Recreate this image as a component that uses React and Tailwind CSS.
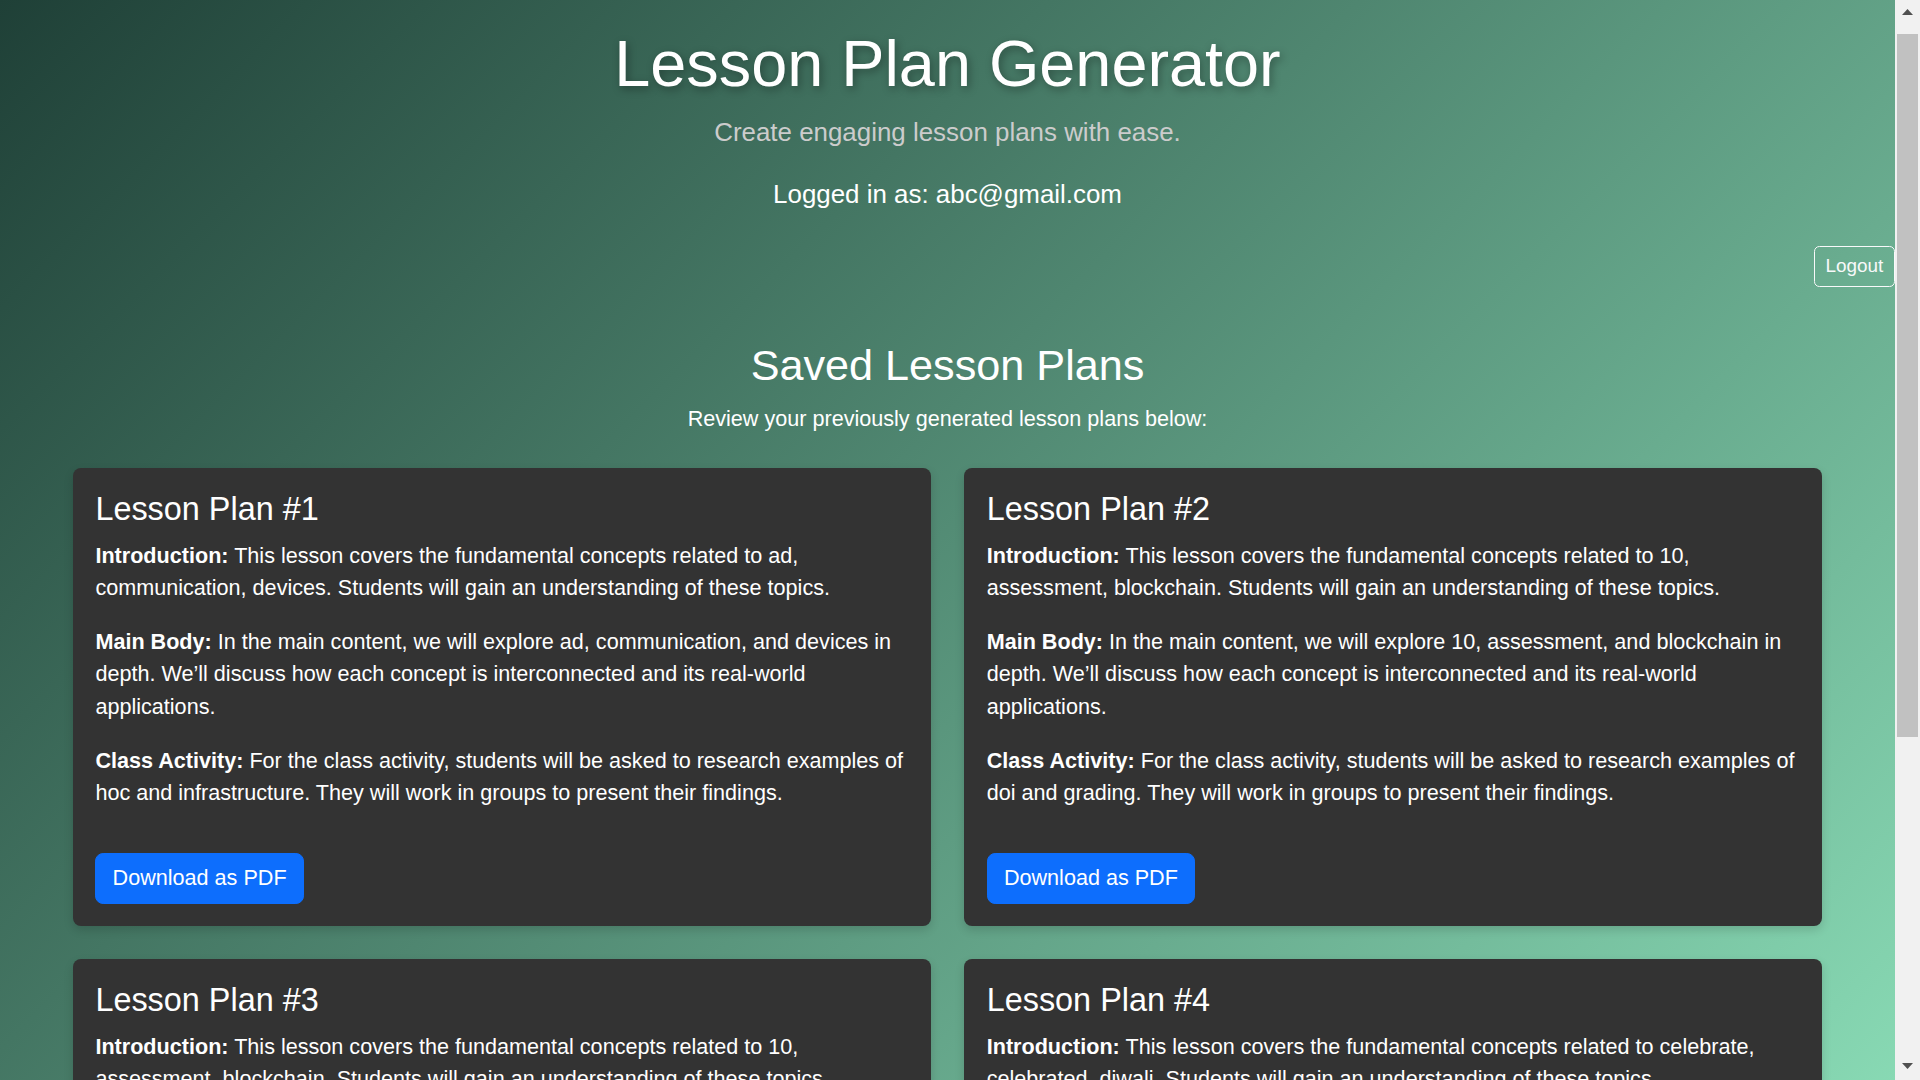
import React from 'react';

const plans = [
  {
    id: 1,
    intro: 'This lesson covers the fundamental concepts related to ad, communication, devices. Students will gain an understanding of these topics.',
    body: 'In the main content, we will explore ad, communication, and devices in depth. We’ll discuss how each concept is interconnected and its real-world applications.',
    activity: 'For the class activity, students will be asked to research examples of hoc and infrastructure. They will work in groups to present their findings.',
  },
  {
    id: 2,
    intro: 'This lesson covers the fundamental concepts related to 10, assessment, blockchain. Students will gain an understanding of these topics.',
    body: 'In the main content, we will explore 10, assessment, and blockchain in depth. We’ll discuss how each concept is interconnected and its real-world applications.',
    activity: 'For the class activity, students will be asked to research examples of doi and grading. They will work in groups to present their findings.',
  },
  {
    id: 3,
    intro: 'This lesson covers the fundamental concepts related to 10, assessment, blockchain. Students will gain an understanding of these topics.',
    body: 'In the main content, we will explore 10, assessment, and blockchain in depth. We’ll discuss how each concept is interconnected and its real-world applications.',
    activity: 'For the class activity, students will be asked to research examples of doi and grading. They will work in groups to present their findings.',
  },
  {
    id: 4,
    intro: 'This lesson covers the fundamental concepts related to celebrate, celebrated, diwali. Students will gain an understanding of these topics.',
    body: 'In the main content, we will explore celebrate, celebrated, and diwali in depth. We’ll discuss how each concept is interconnected and its real-world applications.',
    activity: 'For the class activity, students will be asked to research examples of festival and traditions. They will work in groups to present their findings.',
  },
];

function PlanCard({ plan }) {
  return (
    <div className="bg-[#333333] rounded-[8px] p-[22px] pl-[22.4px] text-white shadow-[0_4px_10px_rgba(0,0,0,0.15)]">
      <h4 className="text-[32.4px] leading-[38.88px] font-normal mb-[10.8px]">Lesson Plan #{plan.id}</h4>
      <p className="mb-[21.6px]">
        <strong className="font-bold">Introduction:</strong> {plan.intro}
      </p>
      <p className="mb-[21.6px]">
        <strong className="font-bold">Main Body:</strong> {plan.body}
      </p>
      <p className="mb-[21.6px]">
        <strong className="font-bold">Class Activity:</strong> {plan.activity}
      </p>
      <button className="mt-[22px] bg-[#0d6efd] text-white border border-[#0d6efd] rounded-[8.1px] px-[16.2px] py-[8.1px] text-[21.6px] leading-[32.4px]">
        Download as PDF
      </button>
    </div>
  );
}

// browser-style vertical scrollbar shown at the right edge
function Scrollbar() {
  return (
    <div className="w-[25px] shrink-0 h-screen bg-[#f1f1f1] flex flex-col">
      <div className="h-[24px] flex items-center justify-center">
        <svg width="11" height="6" viewBox="0 0 11 6"><path d="M5.5 0L11 6H0z" fill="#505050" /></svg>
      </div>
      <div className="mt-[10px] mx-[2px] h-[703px] bg-[#c1c1c1]" />
      <div className="flex-1" />
      <div className="h-[28px] flex items-center justify-center">
        <svg width="11" height="6" viewBox="0 0 11 6"><path d="M0 0H11L5.5 6z" fill="#505050" /></svg>
      </div>
    </div>
  );
}

export default function App() {
  return (
    <div className="h-screen flex overflow-hidden">
      <div className="flex-1 min-w-0 overflow-y-auto [scrollbar-width:none]">
        <div className="min-h-full flex flex-col bg-[linear-gradient(135deg,#1f4037,#99f2c8)] font-['Liberation_Sans',Arial,sans-serif] text-[21.6px] leading-[32.4px] text-white pb-[150px]">
          {/* header */}
          <header className="pt-[25.4px] text-center">
            <h1 className="text-[64.8px] leading-[77.76px] font-normal mb-[9.6px] [text-shadow:2px_3px_8px_rgba(0,0,0,0.35)]">
              Lesson Plan Generator
            </h1>
            <p className="text-[25.92px] leading-[38.88px] text-[#cccccc]">Create engaging lesson plans with ease.</p>
            <p className="mt-[23.8px] text-[25.92px] leading-[38.88px]">Logged in as: abc@gmail.com</p>
          </header>

          <div className="flex justify-end mt-[31.6px]">
            <button className="border border-[#f8f9fa] text-[#f8f9fa] rounded-[5.4px] px-[10.8px] py-[5.4px] text-[18.9px] leading-[28.35px]">
              Logout
            </button>
          </div>

          {/* saved plans */}
          <section className="mt-[52.5px]">
            <h2 className="text-center text-[43.2px] leading-[51.84px] font-normal mb-[11.4px]">Saved Lesson Plans</h2>
            <p className="text-center">Review your previously generated lesson plans below:</p>

            <div className="mt-[32.8px] px-[73px] grid grid-cols-2 gap-x-[33.6px] gap-y-[33px]">
              {plans.map((plan) => (
                <PlanCard key={plan.id} plan={plan} />
              ))}
            </div>
          </section>
        </div>
      </div>
      <Scrollbar />
    </div>
  );
}
